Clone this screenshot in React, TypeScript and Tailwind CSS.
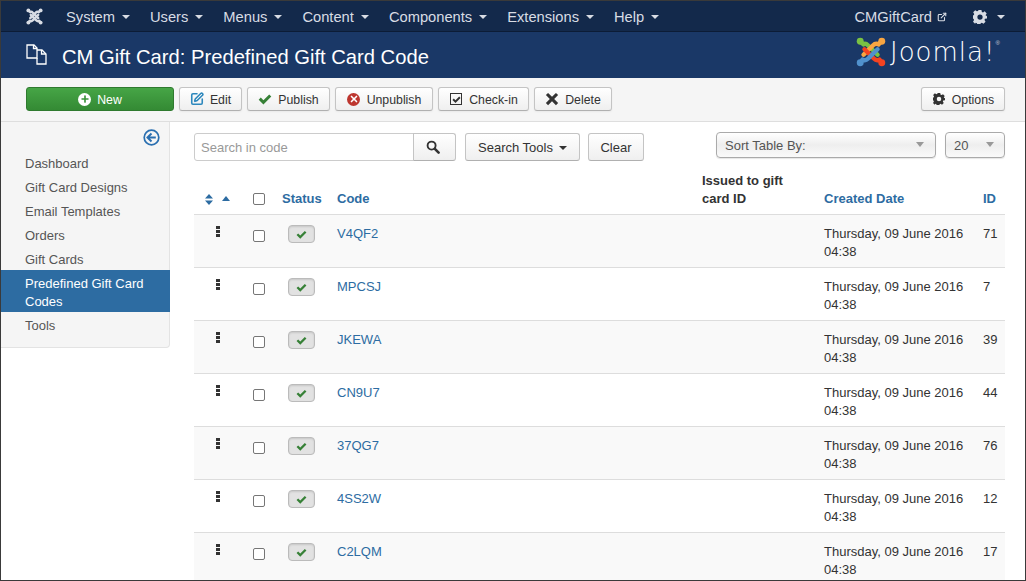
import React from "react";
import { Plus, X, ExternalLink, SquarePen } from "lucide-react";

const font = "font-['Liberation_Sans',Arial,sans-serif]";

function Caret({ className = "" }: { className?: string }) {
  return <span className={`inline-block w-0 h-0 border-x-[4px] border-x-transparent border-t-[4px] ${className}`} />;
}

function Gear({ size = 14, color = "#333" }: { size?: number; color?: string }) {
  return (
    <svg width={size} height={size} viewBox="0 0 24 24" fill={color}>
      <path fillRule="evenodd" d="M9.500 0h5l.7 3.300 2 .8 2.800-1.800 3.500 3.500-1.800 2.800.8 2L24 9.500v5l-3.500.7-.8 2 1.800 2.800-3.500 3.500-2.800-1.800-2 .8-.7 3.500h-5l-.7-3.500-2-.8L3.500 23.500 0 20l1.800-2.800-.8-2L-2 14.500v-5l3.300-.7.8-2L0.300 4 3.800 .5l2.800 1.800 2-.8zM12 7.500a4.500 4.500 0 1 0 0 9 4.500 4.500 0 0 0 0-9z" />
    </svg>
  );
}

function Tick({ w, color }: { w: number; color: string }) {
  return (
    <svg width={w} height={w} viewBox="0 0 16 16" fill={color}>
      <path d="M0.800 8.800 3.200 6.400 6.200 9.400 12.800 2.800 15.200 5.200 6.200 14.200z" />
    </svg>
  );
}

function Cross({ w, color }: { w: number; color: string }) {
  return (
    <svg width={w} height={w} viewBox="0 0 16 16" fill={color}>
      <path d="M3.500 1 8 5.500 12.500 1 15 3.500 10.500 8 15 12.500 12.500 15 8 10.500 3.500 15 1 12.500 5.500 8 1 3.500z" />
    </svg>
  );
}

function JoomlaMark({ size, multi }: { size: number; multi?: boolean }) {
  const c = multi ? ["#7ac143", "#f9a541", "#f44321", "#5091cd"] : ["#d8dce4", "#d8dce4", "#d8dce4", "#d8dce4"];
  return (
    <svg width={size} height={size} viewBox="0 0 32 32" fill="none" strokeLinecap="round" strokeLinejoin="round">
      <path d="M5 5 L8 8 Q10 6 13 9 L23 19" stroke={c[0]} strokeWidth="4.600" />
      <path d="M27 4.500 L24 8 Q21 6 18 9 L8 19" stroke={c[1]} strokeWidth="4.600" />
      <path d="M9 13 L19 23 Q22 26 25 24 L27 27" stroke={c[2]} strokeWidth="4.600" />
      <path d="M23 13 L13 23 Q10 26 7 24 L5 27" stroke={c[3]} strokeWidth="4.600" />
      <circle cx="4.500" cy="4.500" r="3.700" fill={c[0]} />
      <circle cx="27.500" cy="4.500" r="3.700" fill={c[1]} />
      <circle cx="27.500" cy="27.500" r="3.700" fill={c[2]} />
      <circle cx="4.500" cy="27.500" r="3.700" fill={c[3]} />
    </svg>
  );
}

function Btn({ icon, label, className = "" }: { icon: React.ReactNode; label: string; className?: string }) {
  return (
    <button className={`h-[24px] flex items-center justify-center gap-[6px] rounded-[3px] border border-[#c4c4c4] border-b-[#b0b0b0] bg-gradient-to-b from-white to-[#efefef] shadow-[0_1px_2px_rgba(0,0,0,0.05)] text-[12.300px] text-[#333] ${className}`}>
      <span className="w-[14px] flex justify-center items-center">{icon}</span>
      <span className="pt-px">{label}</span>
    </button>
  );
}

const menu = ["System", "Users", "Menus", "Content", "Components", "Extensions", "Help"];
const side = ["Dashboard", "Gift Card Designs", "Email Templates", "Orders", "Gift Cards"];
const rows: [string, string][] = [
  ["V4QF2", "71"],
  ["MPCSJ", "7"],
  ["JKEWA", "39"],
  ["CN9U7", "44"],
  ["37QG7", "76"],
  ["4SS2W", "12"],
  ["C2LQM", "17"],
];

function Box() {
  return <span className="block w-[12px] h-[12px] border border-[#767676] rounded-[2px] bg-white" />;
}

export default function App() {
  return (
    <div className={`${font} w-[1026px] h-[581px] overflow-hidden bg-white border border-[#3a3a3a] text-[13px] text-[#333] leading-[18px]`}>
      <nav className="h-[31px] bg-[#13294b] border-b border-[#0c1c36] flex items-center text-[14.700px] text-[#d8dce4] pt-px">
        <div className="w-[65px] pl-[25px] flex items-center"><JoomlaMark size={17} /></div>
        <div className="flex gap-[20px]">
          {menu.map((m) => (
            <span key={m} className="flex items-center gap-[7px]">{m}<Caret className="border-t-[#d8dce4]" /></span>
          ))}
        </div>
        <div className="ml-auto flex items-center">
          <span className="flex items-center gap-[5px] mr-[26px]">CMGiftCard<ExternalLink size={10} strokeWidth={2.600} /></span>
          <span className="flex items-center gap-[10px] mr-[20px]"><Gear size={14} color="#d8dce4" /><Caret className="border-t-[#d8dce4]" /></span>
        </div>
      </nav>
      <header className="h-[46px] bg-[#1a3867] flex items-center relative pl-[25px]">
        <svg width="21" height="21" viewBox="0 0 21 21" fill="none" stroke="#fff" strokeWidth="1.300" className="mb-[2px]">
          <path d="M1 1h7l3 3v10H1z" />
          <path d="M11 6h5l4 4v10h-9v-6" />
          <path d="M7.500 1v3.500H11M15.500 6v4H20" />
        </svg>
        <h1 className="text-[20.200px] text-white ml-[15px] leading-[24px] pt-[3px] font-normal">CM Gift Card: Predefined Gift Card Code</h1>
        <div className="absolute left-[855px] top-[5px] flex items-center">
          <JoomlaMark size={30} multi />
          <span className="font-['DejaVu_Sans',sans-serif] font-extralight text-[26px] text-white ml-[4px] leading-[30px] tracking-[1px]">Joomla!</span>
          <span className="text-[6px] text-[#cdd3dd] self-start leading-[8px] mt-[2px]">®</span>
        </div>
      </header>
      <div className="h-[44px] bg-[#f5f5f5] border-b border-[#dedede] flex items-start pt-[9px] pl-[25px] pr-[20px] gap-[5px]">
        <button className="w-[148px] h-[24px] flex items-center justify-center gap-[6px] rounded-[3px] border border-[#2f7a2f] bg-gradient-to-b from-[#46a546] to-[#348a34] text-[12.300px] text-white">
          <span className="w-[13px] h-[13px] rounded-full bg-white flex items-center justify-center"><Plus size={10} strokeWidth={4} color="#3a943a" /></span>
          <span className="pt-px">New</span>
        </button>
        <Btn icon={<SquarePen size={14} strokeWidth={2.700} color="#2d88bd" />} label="Edit" className="w-[63px]" />
        <Btn icon={<Tick w={14} color="#378137" />} label="Publish" className="w-[83px]" />
        <Btn
          icon={<span className="w-[13px] h-[13px] rounded-full bg-[#bd362f] flex items-center justify-center"><X size={10} strokeWidth={4} color="#fff" /></span>}
          label="Unpublish"
          className="w-[98px]"
        />
        <Btn
          icon={<span className="w-[12px] h-[12px] border border-[#333] flex items-center justify-center"><Tick w={9} color="#333" /></span>}
          label="Check-in"
          className="w-[91px]"
        />
        <Btn icon={<Cross w={14} color="#333" />} label="Delete" className="w-[78px]" />
        <Btn icon={<Gear size={12} />} label="Options" className="ml-auto w-[84px]" />
      </div>
      <div className="flex items-start">
        <aside className="w-[169px] shrink-0 bg-[#f5f5f5] border-b border-r border-[#e3e3e3] rounded-br-[4px] pb-[11px] text-[#555]">
          <div className="h-[28px] flex justify-end pr-[9px] pt-[7px]">
            <svg width="17" height="17" viewBox="0 0 17 17" fill="none" stroke="#2a6fb0" strokeWidth="1.700">
              <circle cx="8.500" cy="8.500" r="7.300" />
              <path d="M8.500 4.500 4.500 8.500l4 4M4.800 8.500h8" strokeWidth="2" />
            </svg>
          </div>
          {side.map((s) => (
            <div key={s} className="pl-[24px] pt-[5px] pb-[1px]">{s}</div>
          ))}
          <div className="-mr-px pl-[24px] pr-[20px] pt-[5px] pb-[1px] bg-[#2d6ca2] text-white">Predefined Gift Card Codes</div>
          <div className="pl-[24px] pt-[5px] pb-[1px]">Tools</div>
        </aside>
        <main className="flex-1 pl-[24px] pr-[20px] min-w-0">
          <div className="flex items-start pt-[11px] h-[48px]">
            <div className="w-[220px] h-[28px] border border-[#ccc] rounded-l-[3px] flex items-center pl-[6px] pt-px text-[#999] bg-white">Search in code</div>
            <div className="w-[43px] h-[28px] -ml-px border border-[#c4c4c4] border-b-[#b0b0b0] rounded-r-[3px] bg-gradient-to-b from-white to-[#efefef] flex items-center justify-center">
              <svg width="14" height="14" viewBox="0 0 15 15" fill="none" stroke="#333" className="-mt-[1px] mr-[3px]">
                <circle cx="6" cy="6" r="4.300" strokeWidth="2" />
                <path d="M9.500 9.500 13.500 13.500" strokeWidth="2.800" strokeLinecap="round" />
              </svg>
            </div>
            <button className="ml-[9px] w-[115px] h-[28px] border border-[#c4c4c4] border-b-[#b0b0b0] rounded-[3px] bg-gradient-to-b from-white to-[#efefef] flex items-center justify-center gap-[6px] pt-px text-[#333]">Search Tools<Caret className="border-t-[#333]" /></button>
            <button className="ml-[8px] w-[56px] h-[28px] border border-[#c4c4c4] border-b-[#b0b0b0] rounded-[3px] bg-gradient-to-b from-white to-[#efefef] flex items-center justify-center pt-px text-[#333]">Clear</button>
            <div className="ml-auto flex gap-[9px] text-[#555] -mt-px">
              <div className="w-[220px] h-[26px] border border-[#aaa] rounded-[4px] bg-gradient-to-b from-white via-[#eee] to-[#fafafa] shadow-[0_1px_1px_rgba(0,0,0,0.1)] flex items-center justify-between pl-[8px] pr-[11px] pt-px">Sort Table By:<Caret className="border-t-[#999] border-t-[5px] -mt-[3px]" /></div>
              <div className="w-[60px] h-[26px] border border-[#aaa] rounded-[4px] bg-gradient-to-b from-white via-[#eee] to-[#fafafa] shadow-[0_1px_1px_rgba(0,0,0,0.1)] flex items-center justify-between pl-[8px] pr-[10px] pt-px">20<Caret className="border-t-[#999] border-t-[5px] -mt-[3px]" /></div>
            </div>
          </div>
          <table className="w-[811px] table-fixed border-collapse">
            <colgroup>
              <col className="w-[59px]" />
              <col className="w-[29px]" />
              <col className="w-[55px]" />
              <col className="w-[365px]" />
              <col className="w-[122px]" />
              <col className="w-[159px]" />
              <col className="w-[22px]" />
            </colgroup>
            <thead>
              <tr className="border-b border-[#ddd] align-bottom font-bold text-left text-[#2d6ca2]">
                <th className="pb-[6px] pl-[11px]">
                  <span className="flex items-center gap-[9px] h-[18px]">
                    <svg width="8" height="11" viewBox="0 0 8 11" fill="#2d6ca2"><path d="M4 0l4 4.500H0zM4 11 0 6.500h8z" /></svg>
                    <svg width="8" height="5" viewBox="0 0 8 5" fill="#2d6ca2" className="mb-[1px]"><path d="M4 0l4 5H0z" /></svg>
                  </span>
                </th>
                <th className="pb-[6px]"><span className="flex h-[18px] items-center"><Box /></span></th>
                <th className="pb-[6px]">Status</th>
                <th className="pb-[6px]">Code</th>
                <th className="pb-[6px] pt-[2px] pr-[20px] text-[#333]">Issued to gift card ID</th>
                <th className="pb-[6px]">Created Date</th>
                <th className="pb-[6px]">ID</th>
              </tr>
            </thead>
            <tbody>
              {rows.map(([code, id], i) => (
                <tr key={code} className={`border-b border-[#ddd] align-top ${i % 2 === 0 ? "bg-[#f9f9f9]" : ""}`}>
                  <td className="pt-[11px] pl-[22px]">
                    <span className="flex flex-col gap-[1px] w-[4px]">
                      <i className="block h-[3px] w-[4px] bg-[#333]" />
                      <i className="block h-[3px] w-[4px] bg-[#333]" />
                      <i className="block h-[3px] w-[4px] bg-[#333]" />
                    </span>
                  </td>
                  <td className="pt-[15px]"><Box /></td>
                  <td className="pt-[10px]">
                    <span className="ml-[6px] w-[27px] h-[18px] rounded-[4px] border border-[#bbb] bg-[#e2e2e2] shadow-[inset_0_1px_2px_rgba(0,0,0,0.12)] flex items-center justify-center">
                      <Tick w={11} color="#378137" />
                    </span>
                  </td>
                  <td className="pt-[10px] pb-[6px] text-[#2d6ca2]">{code}</td>
                  <td />
                  <td className="pt-[10px] pb-[6px]">Thursday, 09 June 2016 04:38</td>
                  <td className="pt-[10px] pb-[6px]">{id}</td>
                </tr>
              ))}
            </tbody>
          </table>
        </main>
      </div>
    </div>
  );
}
